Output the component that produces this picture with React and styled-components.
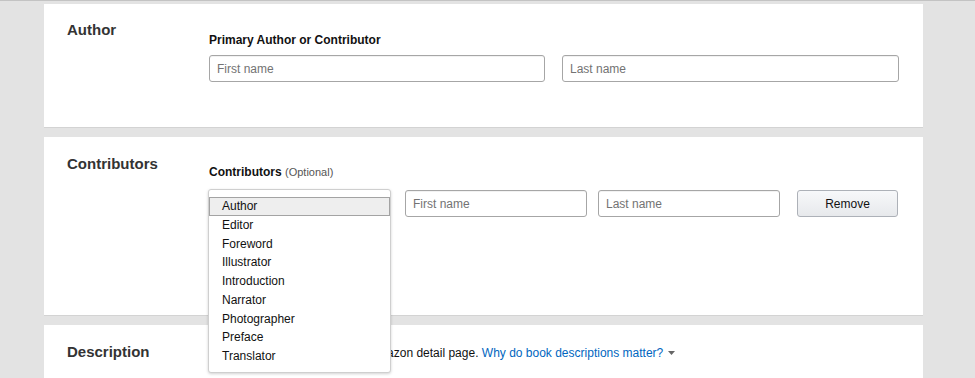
import React from 'react';
import styled, { createGlobalStyle } from 'styled-components';

const GlobalStyle = createGlobalStyle`
  html, body {
    margin: 0;
    padding: 0;
    background: #e3e3e3;
    font-family: "Liberation Sans", Arial, sans-serif;
    color: #111;
  }
`;

const Page = styled.div`
  border-top: 1px solid #c3c3c3;
  padding: 3px 0 0 44px;
  display: flex;
  flex-direction: column;
  gap: 9px;
  height: 374px;
  overflow: hidden;
`;

const Card = styled.section`
  box-sizing: border-box;
  width: 879px;
  background: #fff;
  border-bottom: 1px solid #d3d3d3;
  display: grid;
  grid-template-columns: 142px 1fr;
  padding: 17px 24px ${p => p.$bottom}px 23px;
  flex-shrink: 0;
`;

const Heading = styled.h2`
  margin: ${p => p.$shift || 0}px 0 0;
  font-size: 15px;
  line-height: 18px;
  font-weight: bold;
  color: #333;
`;

const Field = styled.div`
  margin-top: ${p => p.$top}px;
  display: flex;
  flex-direction: column;
`;

const Label = styled.div`
  font-size: 12px;
  line-height: 16px;
  font-weight: bold;
  color: #111;
  margin-bottom: ${p => p.$gap}px;
`;

const Optional = styled.span`
  font-weight: normal;
  font-size: 11px;
  color: #555;
`;

const Row = styled.div`
  display: flex;
  align-items: flex-start;
`;

const TextInput = styled.input`
  box-sizing: border-box;
  width: ${p => p.$w}px;
  height: 27px;
  margin: 0 0 0 ${p => p.$ml || 0}px;
  border: 1px solid #a6a6a6;
  border-radius: 3px;
  padding: 0 7px;
  font-family: inherit;
  font-size: 12px;
  color: #111;
  background: #fff;
  box-shadow: inset 0 1px 0 rgba(0, 0, 0, 0.05);
  outline: none;
  &::placeholder {
    color: #737373;
  }
`;

const SelectWrap = styled.div`
  position: relative;
  width: 182px;
  height: 27px;
`;

const SelectBox = styled.div`
  box-sizing: border-box;
  height: 27px;
  border: 1px solid #a6a6a6;
  border-radius: 3px;
  background: #f3f3f3;
`;

const OptionList = styled.ul`
  position: absolute;
  top: -1px;
  left: -1px;
  z-index: 5;
  box-sizing: border-box;
  width: 183px;
  margin: 0;
  padding: 7px 0 6px;
  list-style: none;
  background: #fff;
  border: 1px solid #cfcfcf;
  border-radius: 3px;
  box-shadow: 0 1px 3px rgba(0, 0, 0, 0.18);
`;

const OptionItem = styled.li`
  box-sizing: border-box;
  height: 18.75px;
  line-height: 16.75px;
  padding-left: 12px;
  font-size: 12px;
  color: #111;
  border: 1px solid ${p => (p.$active ? '#a3a3a3' : 'transparent')};
  background: ${p => (p.$active ? '#eeeeee' : 'transparent')};
`;

const Button = styled.button`
  box-sizing: border-box;
  width: 101px;
  height: 27px;
  margin-left: 17px;
  border: 1px solid #adb1b8;
  border-radius: 3px;
  background: linear-gradient(to bottom, #f7f8fa, #e7e9ec);
  font-family: inherit;
  font-size: 12px;
  color: #111;
  cursor: pointer;
`;

const Blurb = styled.p`
  margin: 3px 0 0 2px;
  font-size: 12px;
  line-height: 16px;
  color: #111;
  white-space: nowrap;
`;

const Link = styled.a`
  color: #0066c0;
  text-decoration: none;
`;

const Caret = styled.svg`
  margin-left: 5px;
  vertical-align: 2px;
`;

const roles = [
  'Author',
  'Editor',
  'Foreword',
  'Illustrator',
  'Introduction',
  'Narrator',
  'Photographer',
  'Preface',
  'Translator',
];

export default function App() {
  return (
    <>
      <GlobalStyle />
      <Page>
        <Card $bottom={45}>
          <Heading>Author</Heading>
          <Field $top={11}>
            <Label $gap={7}>Primary Author or Contributor</Label>
            <Row>
              <TextInput $w={336} placeholder="First name" />
              <TextInput $w={337} $ml={17} placeholder="Last name" />
            </Row>
          </Field>
        </Card>

        <Card $bottom={98}>
          <Heading $shift={1}>Contributors</Heading>
          <Field $top={10}>
            <Label $gap={10}>
              Contributors <Optional>(Optional)</Optional>
            </Label>
            <Row>
              <SelectWrap>
                <SelectBox />
                <OptionList>
                  {roles.map((r, i) => (
                    <OptionItem key={r} $active={i === 0}>{r}</OptionItem>
                  ))}
                </OptionList>
              </SelectWrap>
              <TextInput $w={182} $ml={14} placeholder="First name" />
              <TextInput $w={182} $ml={11} placeholder="Last name" />
              <Button>Remove</Button>
            </Row>
          </Field>
        </Card>

        <Card $bottom={40}>
          <Heading $shift={1}>Description</Heading>
          <Blurb>
            Summary will appear on your Amazon detail page.{' '}
            <Link href="#">Why do book descriptions matter?</Link>
            <Caret width="7" height="4" viewBox="0 0 7 4">
              <path d="M0 0h7L3.5 4z" fill="#666" />
            </Caret>
          </Blurb>
        </Card>
      </Page>
    </>
  );
}
